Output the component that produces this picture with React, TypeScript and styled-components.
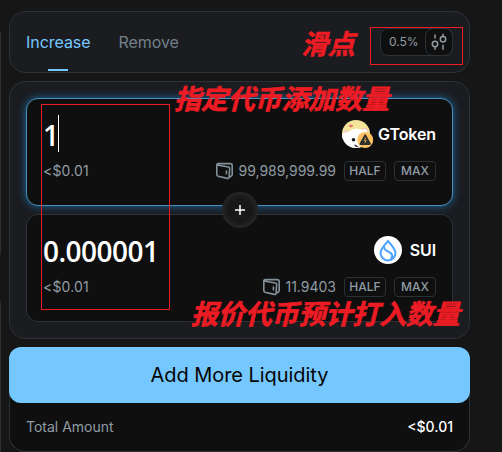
import React from 'react';
import styled, { createGlobalStyle } from 'styled-components';

const line = '#2a3137';
const muted = '#909ca4';
const blue = '#75c8ff';
const red = '#ed1c24';

const Global = createGlobalStyle`
  * { box-sizing: border-box; }
  body { margin: 0; background: #161616; font-family: Inter, "Liberation Sans", sans-serif; }
`;

const Page = styled.main`
  position: relative;
  display: flex;
  width: 502px;
  height: 452px;
  overflow: hidden;
  background: #161616;
`;
const Neighbours = styled.aside`
  width: 9px;
  flex: none;
  display: flex;
  flex-direction: column;
  gap: 22px;
  padding-top: 20px;
`;
const NeighbourEdge = styled.div<{ $h: number }>`
  width: 16px;
  height: ${p => p.$h}px;
  margin-left: -15px;
  flex: none;
  border: 1px solid ${line};
  border-left: 0;
  border-radius: 0 16px 16px 0;
`;
const Column = styled.section`
  width: 461px;
  flex: none;
  display: flex;
  flex-direction: column;
  gap: 8px;
  padding-top: 11px;
`;
const Card = styled.div`
  flex: none;
  border: 1px solid ${line};
  border-radius: 16px;
  background: #1b1c20;
`;
const TabCard = styled(Card)`
  height: 62px;
  display: flex;
  justify-content: space-between;
  align-items: center;
  padding: 0 16px;
`;
const Tabs = styled.nav`
  display: flex;
  height: 60px;
  gap: 28px;
`;
const Tab = styled.div<{ $active?: boolean }>`
  display: flex;
  position: relative;
  align-items: center;
  font-size: 16px;
  letter-spacing: -0.05px;
  color: ${p => (p.$active ? blue : '#72808a')};
  &::after {
    content: "";
    display: ${p => (p.$active ? 'block' : 'none')};
    position: absolute;
    left: 22px;
    bottom: 1px;
    width: 20px;
    height: 2px;
    background: ${blue};
  }
`;
const Slippage = styled.div`
  display: flex;
  width: 73px;
  height: 28px;
  border: 1px solid ${line};
  border-radius: 8px;
  background: #0f0f0f;
  color: ${muted};
  font-size: 12px;
  line-height: 26px;
  padding-left: 8px;
  justify-content: space-between;
`;
const Settings = styled.div`
  width: 28px;
  height: 28px;
  margin: -1px;
  border: 1px solid ${line};
  border-radius: 8px;
  display: grid;
  place-items: center;
`;
const FormCard = styled(Card)`
  height: 258px;
  padding: 16px;
  display: flex;
  flex-direction: column;
  gap: 8px;
  position: relative;
`;
const Field = styled.div<{ $focus?: boolean }>`
  height: 108px;
  border: 1px solid ${p => (p.$focus ? '#4a8fbd' : line)};
  border-radius: 12px;
  background: #0f0f0f;
  box-shadow: ${p => (p.$focus ? '0 0 8px 0 #1a6ba3' : 'none')};
  padding: 17px 16px 0;
`;
const FieldRow = styled.div<{ $h: number }>`
  display: flex;
  height: ${p => p.$h}px;
  align-items: center;
  justify-content: space-between;
`;
const Amount = styled.div`
  display: flex;
  align-items: center;
  font-family: "Open Sans", "Noto Sans", sans-serif;
  font-size: 28px;
  font-weight: 600;
  letter-spacing: -0.55px;
  line-height: 38px;
  color: #fff;
`;
const Caret = styled.i`
  width: 1px;
  height: 37px;
  margin: -4px 0 0 -0.5px;
  background: #fff;
`;
const Token = styled.div<{ $gap: number }>`
  display: flex;
  align-items: center;
  gap: ${p => p.$gap}px;
  color: #fff;
  font-size: 16px;
  font-weight: 600;
  letter-spacing: -0.1px;
  line-height: 24px;
`;
const Muted = styled.span`
  color: ${muted};
  font-size: 14px;
`;
const FiatValue = styled(Muted)`
  letter-spacing: 0.15px;
  padding-bottom: 2px;
`;
const Balance = styled.div`
  display: flex;
  align-items: center;
  gap: 8px;
  color: ${muted};
  font-size: 14px;
  svg { margin-right: -4px; }
`;
const BalanceValue = styled.span`
  padding-bottom: 1px;
`;
const Chip = styled.span`
  width: 42px;
  height: 20px;
  border: 1px solid ${line};
  border-radius: 4px;
  font-size: 12px;
  font-weight: 500;
  line-height: 18px;
  text-align: center;
`;
const Plus = styled.div`
  position: absolute;
  left: 212px;
  top: 110px;
  width: 36px;
  height: 36px;
  border-radius: 50%;
  background: #181818;
  box-shadow: inset 0 0 5px 2px #2b2b2b;
  display: grid;
  place-items: center;
`;
const Submit = styled.button`
  height: 56px;
  flex: none;
  border: 0;
  border-radius: 12px;
  background: ${blue};
  color: #050505;
  font: 400 20px Inter, sans-serif;
  letter-spacing: -0.05px;
  position: relative;
  padding: 0;
`;
const Summary = styled(Card)`
  height: 65px;
  margin-top: -24px;
  border-top: 0;
  border-radius: 0 0 16px 16px;
  background: #0f0f0f;
  padding: 15px 16px 0;
  display: flex;
  justify-content: space-between;
  align-items: center;
`;
const Total = styled.span`
  color: #fff;
  font-size: 14px;
  font-weight: 500;
`;
const Frame = styled.div<{ $x: number; $y: number; $w: number; $h: number }>`
  position: absolute;
  left: ${p => p.$x}px;
  top: ${p => p.$y}px;
  width: ${p => p.$w}px;
  height: ${p => p.$h}px;
  border: 1px solid ${red};
`;
const Note = styled.div<{ $x: number; $y: number }>`
  position: absolute;
  left: ${p => p.$x}px;
  top: ${p => p.$y}px;
  color: ${red};
  font: italic 700 27px/32px "Noto Sans CJK SC", sans-serif;
  letter-spacing: -0.15px;
  -webkit-text-stroke: 0.6px ${red};
  white-space: nowrap;
`;

const Wallet = () => (
  <svg width="19" height="18" viewBox="0 0 19 18" fill="none" stroke="#849199" strokeWidth="1.6" strokeLinejoin="round" strokeLinecap="round">
    <path d="M2 3 13.4 5Q14.8 5.3 14.7 6.600L14 15.400Q13.800 16.800 12.400 16.400L3 14.200Q1.800 13.900 1.800 12.600V3Q1.800 1.600 3.200 1.600H15Q17.200 1.600 17.200 3.700V12.500Q17.200 14 14 15.400" />
    <path d="M11.4 9v2.7" />
  </svg>
);
const Sliders = () => (
  <svg width="18" height="18" viewBox="0 0 18 18" fill="none" stroke={muted} strokeWidth="1.5" strokeLinecap="round">
    <circle cx="5" cy="11" r="2.7" />
    <circle cx="13" cy="6.3" r="2.7" />
    <path d="M5 2v3M5 14v2.2M13 1.3v2M13 12.3v4" />
  </svg>
);
const CatLogo = () => (
  <svg width="32" height="28" viewBox="0 0 32 28">
    <clipPath id="cat"><circle cx="14" cy="14" r="14" /></clipPath>
    <g clipPath="url(#cat)">
      <path fill="#f4e59b" d="M0 0h28v28H0z" />
      <path d="M0 15 2.5 10.5 6 12q6-5 13-2.500l5-1.500 4 7v13H0Z" fill="#fff" />
      <path d="M2 13l1.500-2.500L6 12M20 9.500l4-1.500 2 4" fill="none" stroke="#eeb8ab" />
      <path d="M7 5.2q1-1.2 2.1 0 1.2-1 2 0 0 1.4-2.2 2.4Q6.8 6.3 7 5.2Z" fill="#e96b68" />
      <circle cx="11.5" cy="19.8" r="1.8" fill="#17191c" />
      <path d="M12 24.5q3 0 5 3l-4-1Z" fill="#4b3032" />
    </g>
    <circle cx="23.2" cy="20" r="8" fill="#ffc162" />
    <path d="M23.2 15.2 28 24h-9.6Z" fill="#30302b" stroke="#30302b" strokeWidth="1.8" strokeLinejoin="round" />
    <path d="M24 17.500l-1.800 2.900h2l-1.500 2.700" fill="none" stroke="#d5a75b" strokeWidth="1" />
  </svg>
);
const SuiLogo = () => (
  <svg width="28" height="28" viewBox="0 0 28 28" fill="none" stroke="#4da2ff" strokeWidth="2">
    <circle cx="14" cy="14" r="14" fill="#fff" stroke="none" />
    <path d="M14 4.8C16.5 8.3 21.5 13 21.5 17a7.5 7.5 0 0 1-15 0C6.5 13 11.5 8.3 14 4.8Z" strokeLinejoin="round" />
    <path d="M10.2 10.5C9.3 16 17.8 15 18.2 19.3Q18.3 21.3 16.7 23.4" />
  </svg>
);

const TokenField = ({ value, balance, focus, children }: { value: string; balance: string; focus?: boolean; children: React.ReactNode }) => (
  <Field $focus={focus}>
    <FieldRow $h={38}>
      <Amount>{value}{focus && <Caret />}</Amount>
      {children}
    </FieldRow>
    <FieldRow $h={34}>
      <FiatValue>&lt;$0.01</FiatValue>
      <Balance><Wallet /><BalanceValue>{balance}</BalanceValue><Chip>HALF</Chip><Chip>MAX</Chip></Balance>
    </FieldRow>
  </Field>
);

const LowerToken = styled(Token)`
  padding-bottom: 2px;
`;

export default function App() {
  return (
    <>
      <Global />
      <Page>
        <Neighbours><NeighbourEdge $h={247} /><NeighbourEdge $h={190} /></Neighbours>
        <Column>
          <TabCard>
            <Tabs><Tab $active>Increase</Tab><Tab>Remove</Tab></Tabs>
            <Slippage>0.5%<Settings><Sliders /></Settings></Slippage>
          </TabCard>
          <FormCard>
            <TokenField value="1" balance="99,989,999.99" focus>
              <LowerToken $gap={4}><CatLogo />GToken</LowerToken>
            </TokenField>
            <TokenField value="0.000001" balance="11.9403">
              <LowerToken $gap={8}><SuiLogo />SUI</LowerToken>
            </TokenField>
            <Plus>
              <svg width="12" height="12" viewBox="0 0 12 12" stroke="#fff" strokeWidth="1.5"><path d="M6 1v10M1 6h10" /></svg>
            </Plus>
          </FormCard>
          <Submit>Add More Liquidity</Submit>
          <Summary><Muted>Total Amount</Muted><Total>&lt;$0.01</Total></Summary>
        </Column>
        <Frame $x={370} $y={27} $w={93} $h={38} />
        <Frame $x={41} $y={104} $w={129} $h={206} />
        <Note $x={301} $y={27}>滑点</Note>
        <Note $x={174} $y={82}>指定代币添加数量</Note>
        <Note $x={191} $y={297}>报价代币预计打入数量</Note>
      </Page>
    </>
  );
}
